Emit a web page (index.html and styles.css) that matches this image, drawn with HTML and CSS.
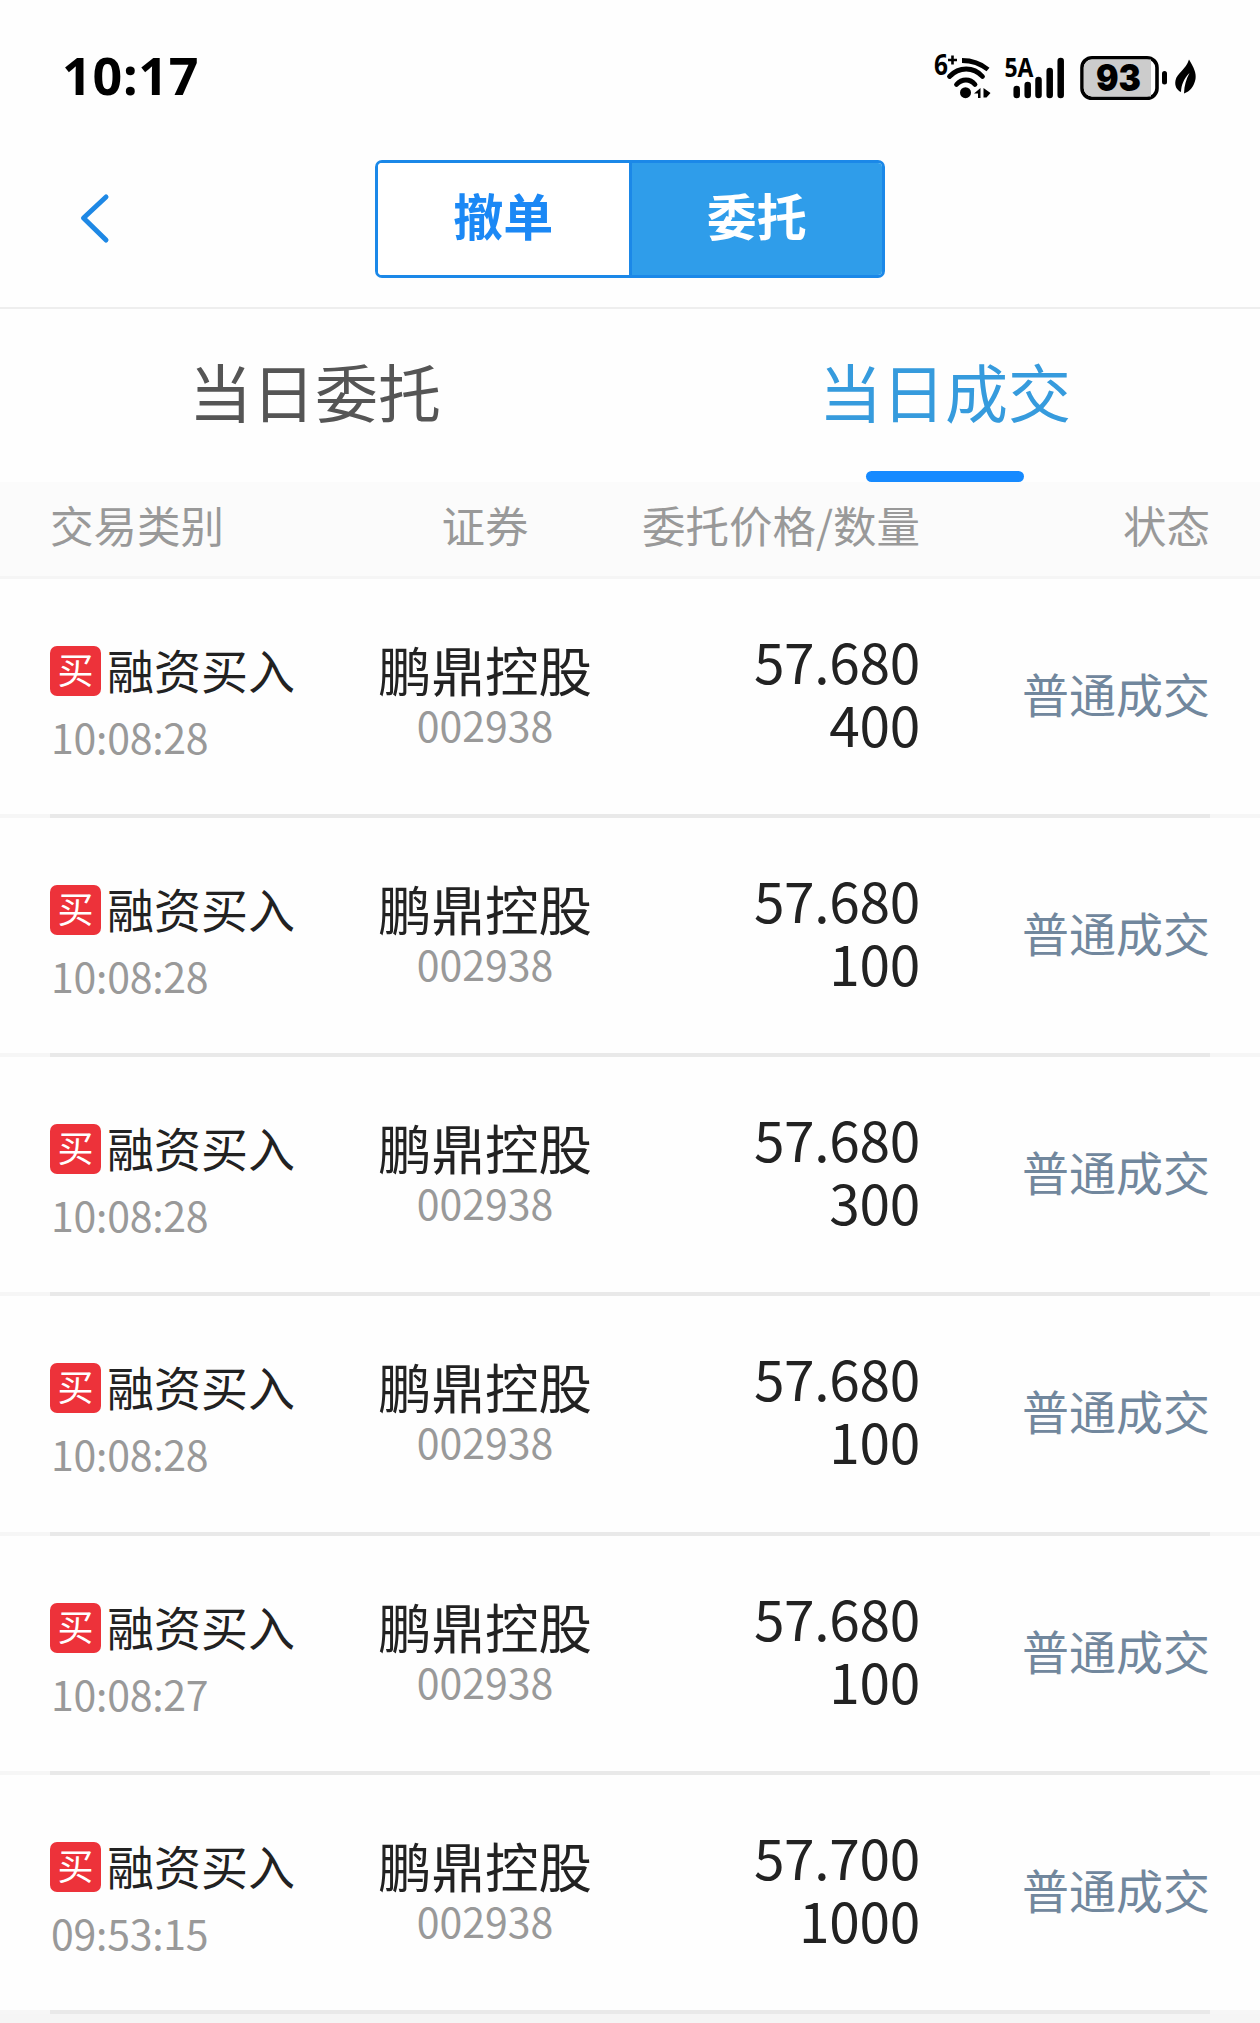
FILE: index.html
```html
<!DOCTYPE html>
<html lang="zh-CN">
<head>
<meta charset="utf-8">
<title>当日成交</title>
<link rel="stylesheet" href="styles.css">
</head>
<body>
<div class="status-bar">
  <span class="clock">10:17</span>
  <svg class="status-icons" width="270" height="70" viewBox="930 40 270 70">
    <text class="net" x="934" y="75" font-size="28.500" textLength="14" lengthAdjust="spacingAndGlyphs">6</text>
    <path d="M952.500 55.500v9M948 60h9" fill="none" stroke="#000" stroke-width="2.600"/>
    <g fill="none" stroke="#000" stroke-width="4.800">
      <path d="M962 60.500c10.500 0 18.500 3 26 9" stroke-linecap="butt"/>
      <path d="M949.500 76.500c9.500-10 24-10 33 0" stroke-linecap="round"/>
      <path d="M956.500 84.500c5.500-6 13.500-6 18.500 0" stroke-linecap="round"/>
    </g>
    <circle cx="965.500" cy="92.700" r="5.500"/>
    <path d="M980.500 88v10h-2.500v-4.500h-4zM983.500 88l7 5-4 4.500h-3z"/>
    <text class="net" x="1004.500" y="77" font-size="27" textLength="29" lengthAdjust="spacingAndGlyphs">5A</text>
    <g fill="none" stroke="#000" stroke-width="6.500" stroke-linecap="round">
      <path d="M1016.700 89v6M1027.700 85v10M1038.500 80v15M1049.700 71v24M1060.700 61v34"/>
    </g>
    <rect x="1082" y="57.700" width="75" height="40.600" rx="10" fill="#fff" stroke="#000" stroke-width="3.600"/>
    <path d="M1092 59.500h59v37h-59a8.300 8.300 0 0 1-8.300-8.300v-20.400a8.300 8.300 0 0 1 8.300-8.300z" fill="#ccc"/>
    <text class="charge" x="1096" y="91" font-size="37" textLength="45" lengthAdjust="spacingAndGlyphs">93</text>
    <rect x="1162" y="71" width="5" height="13.500" rx="2.500"/>
    <path d="M1189 59.500c5 8 7.500 14 6.500 19.500c-1.300 7-5.500 12.500-11.500 14.500c.3-8 2-14 5.500-20.500c-5.500 5.500-8.300 12-8.500 19c-4.500-2-6.500-6.500-5.500-11.500c1.500-7.500 10.500-11 13.500-21z"/>
  </svg>
</div>

<header class="nav">
  <svg class="back" width="36" height="56" viewBox="0 0 36 56"><path d="M30 7L7.500 28L30 50" fill="none" stroke="#1e88e5" stroke-width="5" stroke-linecap="round" stroke-linejoin="round"/></svg>
  <div class="segment">
    <span class="segment-item">撤单</span>
    <span class="segment-item active">委托</span>
  </div>
</header>

<nav class="tabs">
  <span class="tab">当日委托</span>
  <span class="tab active">当日成交</span>
</nav>

<div class="table-head">
  <span>交易类别</span>
  <span class="center">证券</span>
  <span class="right">委托价格/数量</span>
  <span class="right">状态</span>
</div>

<main>
  <section class="deal">
    <div class="deal-body">
      <div class="kind"><div class="kind-line"><i class="badge">买</i><span>融资买入</span></div><div class="time">10:08:28</div></div>
      <div class="stock"><div class="name">鹏鼎控股</div><div class="code">002938</div></div>
      <div class="price"><div>57.680</div><div>400</div></div>
      <div class="state">普通成交</div>
    </div>
    <div class="rule"></div>
  </section>
  <section class="deal">
    <div class="deal-body">
      <div class="kind"><div class="kind-line"><i class="badge">买</i><span>融资买入</span></div><div class="time">10:08:28</div></div>
      <div class="stock"><div class="name">鹏鼎控股</div><div class="code">002938</div></div>
      <div class="price"><div>57.680</div><div>100</div></div>
      <div class="state">普通成交</div>
    </div>
    <div class="rule"></div>
  </section>
  <section class="deal">
    <div class="deal-body">
      <div class="kind"><div class="kind-line"><i class="badge">买</i><span>融资买入</span></div><div class="time">10:08:28</div></div>
      <div class="stock"><div class="name">鹏鼎控股</div><div class="code">002938</div></div>
      <div class="price"><div>57.680</div><div>300</div></div>
      <div class="state">普通成交</div>
    </div>
    <div class="rule"></div>
  </section>
  <section class="deal">
    <div class="deal-body">
      <div class="kind"><div class="kind-line"><i class="badge">买</i><span>融资买入</span></div><div class="time">10:08:28</div></div>
      <div class="stock"><div class="name">鹏鼎控股</div><div class="code">002938</div></div>
      <div class="price"><div>57.680</div><div>100</div></div>
      <div class="state">普通成交</div>
    </div>
    <div class="rule"></div>
  </section>
  <section class="deal">
    <div class="deal-body">
      <div class="kind"><div class="kind-line"><i class="badge">买</i><span>融资买入</span></div><div class="time">10:08:27</div></div>
      <div class="stock"><div class="name">鹏鼎控股</div><div class="code">002938</div></div>
      <div class="price"><div>57.680</div><div>100</div></div>
      <div class="state">普通成交</div>
    </div>
    <div class="rule"></div>
  </section>
  <section class="deal">
    <div class="deal-body">
      <div class="kind"><div class="kind-line"><i class="badge">买</i><span>融资买入</span></div><div class="time">09:53:15</div></div>
      <div class="stock"><div class="name">鹏鼎控股</div><div class="code">002938</div></div>
      <div class="price"><div>57.700</div><div>1000</div></div>
      <div class="state">普通成交</div>
    </div>
    <div class="rule"></div>
  </section>
</main>
</body>
</html>
```
FILE: styles.css
```css
* { box-sizing: border-box; }

body {
  margin: 0;
  width: 1260px;
  height: 2023px;
  overflow: hidden;
  display: flex;
  flex-direction: column;
  background: #f5f5f5;
  color: #222;
  font-family: "Noto Sans CJK SC", sans-serif;
}

.status-bar {
  height: 150px;
  flex: none;
  padding: 40px 60px 0 62px;
  display: flex;
  justify-content: space-between;
  align-items: flex-start;
  background: #fefefe;
  color: #000;
}
.clock {
  padding-top: 10px;
  font: bold 52px/50px "Noto Sans", sans-serif;
  letter-spacing: .7px;
}
.net { font-family: "Noto Sans", sans-serif; font-weight: 700; }
.charge { font-family: Inter, sans-serif; font-weight: 900; }

.nav {
  height: 159px;
  flex: none;
  padding: 10px 375px 0 76px;
  display: flex;
  justify-content: space-between;
  align-items: flex-start;
  background: #fefefe;
  border-bottom: 2px solid #eee;
}
.back { margin-top: 30px; }
.segment {
  width: 510px;
  height: 118px;
  display: flex;
  border: 3px solid #1b88e8;
  border-radius: 7px;
  overflow: hidden;
  font-size: 50px;
  font-weight: 700;
  line-height: 102px;
}
.segment-item {
  flex: 1;
  text-align: center;
  color: #1b88f5;
  background: #fff;
}
.segment-item.active {
  color: #fff;
  background: #2f9dea;
  border-left: 3px solid #1b88e8;
}

.tabs {
  height: 173px;
  flex: none;
  display: flex;
  background: #fefefe;
}
.tab {
  flex: 1;
  display: flex;
  flex-direction: column;
  align-items: center;
  justify-content: space-between;
  padding-top: 31px;
  font-size: 63px;
  line-height: 100px;
  color: #555;
}
.tab.active { color: #369bdd; }
.tab.active::after {
  content: "";
  width: 158px;
  height: 11px;
  border-radius: 5.500px;
  background: #168aff;
}

.table-head {
  height: 96.800px;
  flex: none;
  padding: 0 50px;
  display: grid;
  grid-template-columns: repeat(4, 1fr);
  background: #fbfbfb;
  border-bottom: 3px solid #f5f5f5;
  font-size: 43.500px;
  line-height: 85px;
  color: #999;
  white-space: nowrap;
}
.center { text-align: center; }
.right { text-align: right; }

.deal {
  height: 239.200px;
  display: flex;
  flex-direction: column;
  background: #fefefe;
}
.deal-body {
  flex: 1;
  padding: 0 50px;
  display: grid;
  grid-template-columns: repeat(4, 1fr);
}
.rule {
  height: 4px;
  padding: 0 50px;
  background: linear-gradient(#e9e9e9, #e9e9e9) content-box, #f6f6f6;
}

.kind { padding-top: 67px; }
.kind-line {
  display: flex;
  gap: 6px;
  height: 50px;
  font-size: 47px;
  line-height: 45px;
}
.badge {
  width: 51px;
  height: 50px;
  border-radius: 7px;
  background: #ed323a;
  color: #fff;
  font-size: 36px;
  font-style: normal;
  line-height: 44px;
  text-align: center;
}
.time {
  margin-top: 15px;
  padding-left: 1px;
  font-size: 41px;
  line-height: 50px;
  letter-spacing: -.25px;
  color: #999;
}
.stock { padding-top: 60px; text-align: center; }
.name { font-size: 53.500px; line-height: 60px; }
.code { font-size: 41px; line-height: 50px; color: #999; }
.price {
  padding-top: 50px;
  text-align: right;
  font-size: 55px;
  line-height: 63px;
  letter-spacing: -.3px;
}
.state {
  padding-top: 84px;
  text-align: right;
  font-size: 47px;
  line-height: 60px;
  color: #71879d;
}
```
